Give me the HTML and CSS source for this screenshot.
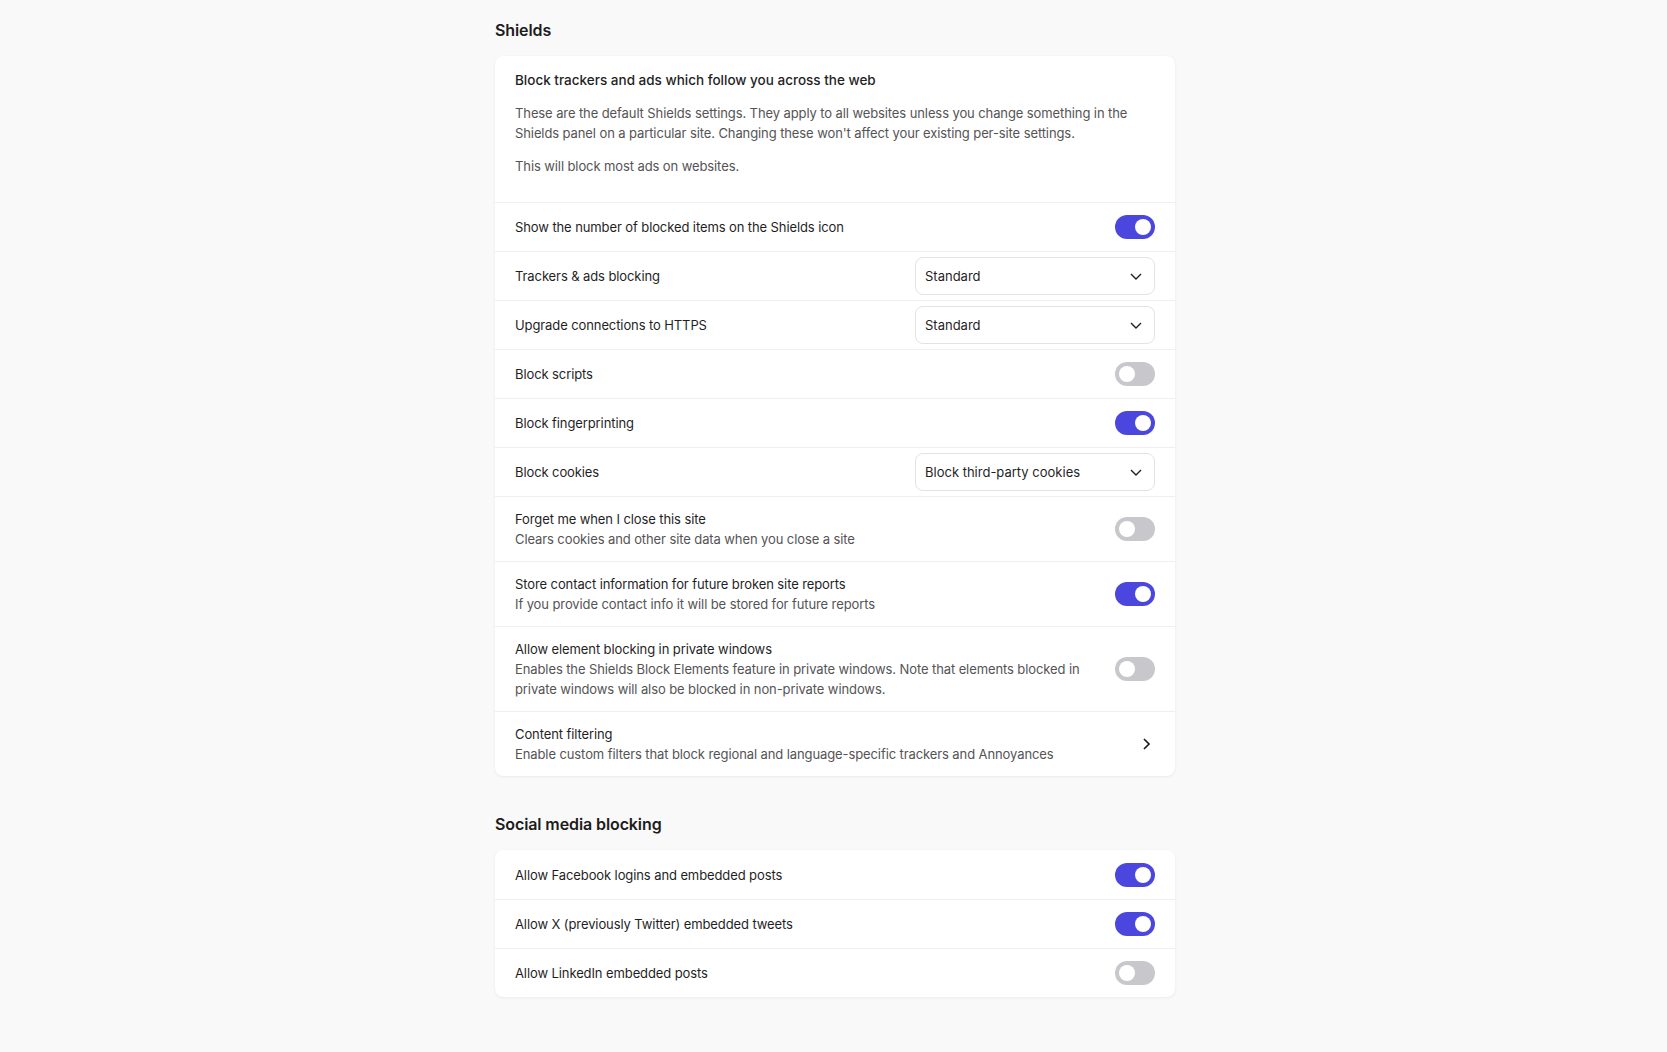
FILE: index.html
```html
<!DOCTYPE html>
<html lang="en">
<head>
    <meta charset="UTF-8">
    <meta name="viewport" content="width=device-width, initial-scale=1.0">
    <title>Shields</title>
    <link rel="stylesheet" href="styles.css">
</head>
<body>
    <div class="page">
        <h2 class="section-title">Shields</h2>
        <div class="card">
            <div class="card-header">
                <div class="card-title">Block trackers and ads which follow you across the web</div>
                <p class="card-desc">These are the default Shields settings. They apply to all websites unless you change something in the Shields panel on a particular site. Changing these won't affect your existing per-site settings.</p>
                <p class="card-desc">This will block most ads on websites.</p>
            </div>

            <div class="row">
                <div class="row-text"><div class="label">Show the number of blocked items on the Shields icon</div></div>
                <div class="toggle on"></div>
            </div>
            <div class="row">
                <div class="row-text"><div class="label">Trackers &amp; ads blocking</div></div>
                <div class="select">
                    <span>Standard</span>
                    <svg class="chevron" viewBox="0 0 16 16"><path d="M3 6l5 5 5-5"/></svg>
                </div>
            </div>
            <div class="row">
                <div class="row-text"><div class="label">Upgrade connections to HTTPS</div></div>
                <div class="select">
                    <span>Standard</span>
                    <svg class="chevron" viewBox="0 0 16 16"><path d="M3 6l5 5 5-5"/></svg>
                </div>
            </div>
            <div class="row">
                <div class="row-text"><div class="label">Block scripts</div></div>
                <div class="toggle"></div>
            </div>
            <div class="row">
                <div class="row-text"><div class="label">Block fingerprinting</div></div>
                <div class="toggle on"></div>
            </div>
            <div class="row">
                <div class="row-text"><div class="label">Block cookies</div></div>
                <div class="select">
                    <span>Block third-party cookies</span>
                    <svg class="chevron" viewBox="0 0 16 16"><path d="M3 6l5 5 5-5"/></svg>
                </div>
            </div>
            <div class="row">
                <div class="row-text">
                    <div class="label">Forget me when I close this site</div>
                    <div class="sublabel">Clears cookies and other site data when you close a site</div>
                </div>
                <div class="toggle"></div>
            </div>
            <div class="row">
                <div class="row-text">
                    <div class="label">Store contact information for future broken site reports</div>
                    <div class="sublabel">If you provide contact info it will be stored for future reports</div>
                </div>
                <div class="toggle on"></div>
            </div>
            <div class="row">
                <div class="row-text">
                    <div class="label">Allow element blocking in private windows</div>
                    <div class="sublabel">Enables the Shields Block Elements feature in private windows. Note that elements blocked in private windows will also be blocked in non-private windows.</div>
                </div>
                <div class="toggle"></div>
            </div>
            <div class="row">
                <div class="row-text">
                    <div class="label">Content filtering</div>
                    <div class="sublabel">Enable custom filters that block regional and language-specific trackers and Annoyances</div>
                </div>
                <svg class="arrow" viewBox="0 0 16 16"><path d="M6 3l5 5-5 5"/></svg>
            </div>
        </div>

        <h2 class="section-title spaced">Social media blocking</h2>
        <div class="card">
            <div class="row first">
                <div class="row-text"><div class="label">Allow Facebook logins and embedded posts</div></div>
                <div class="toggle on"></div>
            </div>
            <div class="row">
                <div class="row-text"><div class="label">Allow X (previously Twitter) embedded tweets</div></div>
                <div class="toggle on"></div>
            </div>
            <div class="row">
                <div class="row-text"><div class="label">Allow LinkedIn embedded posts</div></div>
                <div class="toggle"></div>
            </div>
        </div>
    </div>
</body>
</html>
```

FILE: styles.css
```css
body {
    margin: 0;
    padding-left: 3px;
    background-color: #f9f9f9;
    font-family: Inter, "Noto Sans", sans-serif;
    color: #1f1f1f;
}
.page {
    width: 680px;
    margin: 0 auto;
    padding: 18px 0 40px;
}
.section-title {
    font-size: 16px;
    line-height: 24px;
    font-weight: 600;
    letter-spacing: -0.1px;
    margin: 0 0 14px;
    color: #1c1c1c;
}
.section-title.spaced {
    margin-top: 36px;
}
.card {
    background-color: white;
    border-radius: 8px;
    box-shadow: 0 1px 3px rgba(0,0,0,0.06), 0 0 1px rgba(0,0,0,0.05);
    overflow: hidden;
}
.card-header {
    padding: 14px 20px 26px;
}
.card-title {
    font-size: 13.5px;
    line-height: 20px;
    font-weight: 500;
}
.card-desc {
    font-size: 13px;
    line-height: 20px;
    letter-spacing: -0.1px;
    color: #545454;
    margin: 13px 0 0;
}
.row {
    display: flex;
    align-items: center;
    min-height: 48px;
    padding: 0 20px;
    border-top: 1px solid #efefef;
}
.row.first {
    border-top: none;
    min-height: 49px;
}
.row-text {
    flex: 1;
    padding: 12px 0;
    padding-right: 24px;
}
.label {
    font-size: 13px;
    line-height: 20px;
    letter-spacing: -0.1px;
    color: #1f1f1f;
}
.sublabel {
    font-size: 13px;
    line-height: 20px;
    letter-spacing: -0.1px;
    color: #545454;
}
.toggle {
    position: relative;
    flex: none;
    width: 40px;
    height: 24px;
    border-radius: 12px;
    background-color: #c8c8cc;
}
.toggle::after {
    content: "";
    position: absolute;
    top: 4px;
    left: 4px;
    width: 16px;
    height: 16px;
    border-radius: 50%;
    background-color: white;
}
.toggle.on {
    background-color: #4a46de;
}
.toggle.on::after {
    left: 20px;
}
.select {
    flex: none;
    display: flex;
    align-items: center;
    justify-content: space-between;
    box-sizing: border-box;
    width: 240px;
    height: 38px;
    padding: 0 10px 0 9px;
    border: 1px solid #e3e3e3;
    border-radius: 8px;
    font-size: 13px;
    color: #1f1f1f;
}
.chevron {
    width: 16px;
    height: 16px;
    fill: none;
    stroke: #1f1f1f;
    stroke-width: 1.4;
}
.arrow {
    flex: none;
    width: 16px;
    height: 16px;
    margin-right: 1px;
    fill: none;
    stroke: #1f1f1f;
    stroke-width: 1.7;
}
```
